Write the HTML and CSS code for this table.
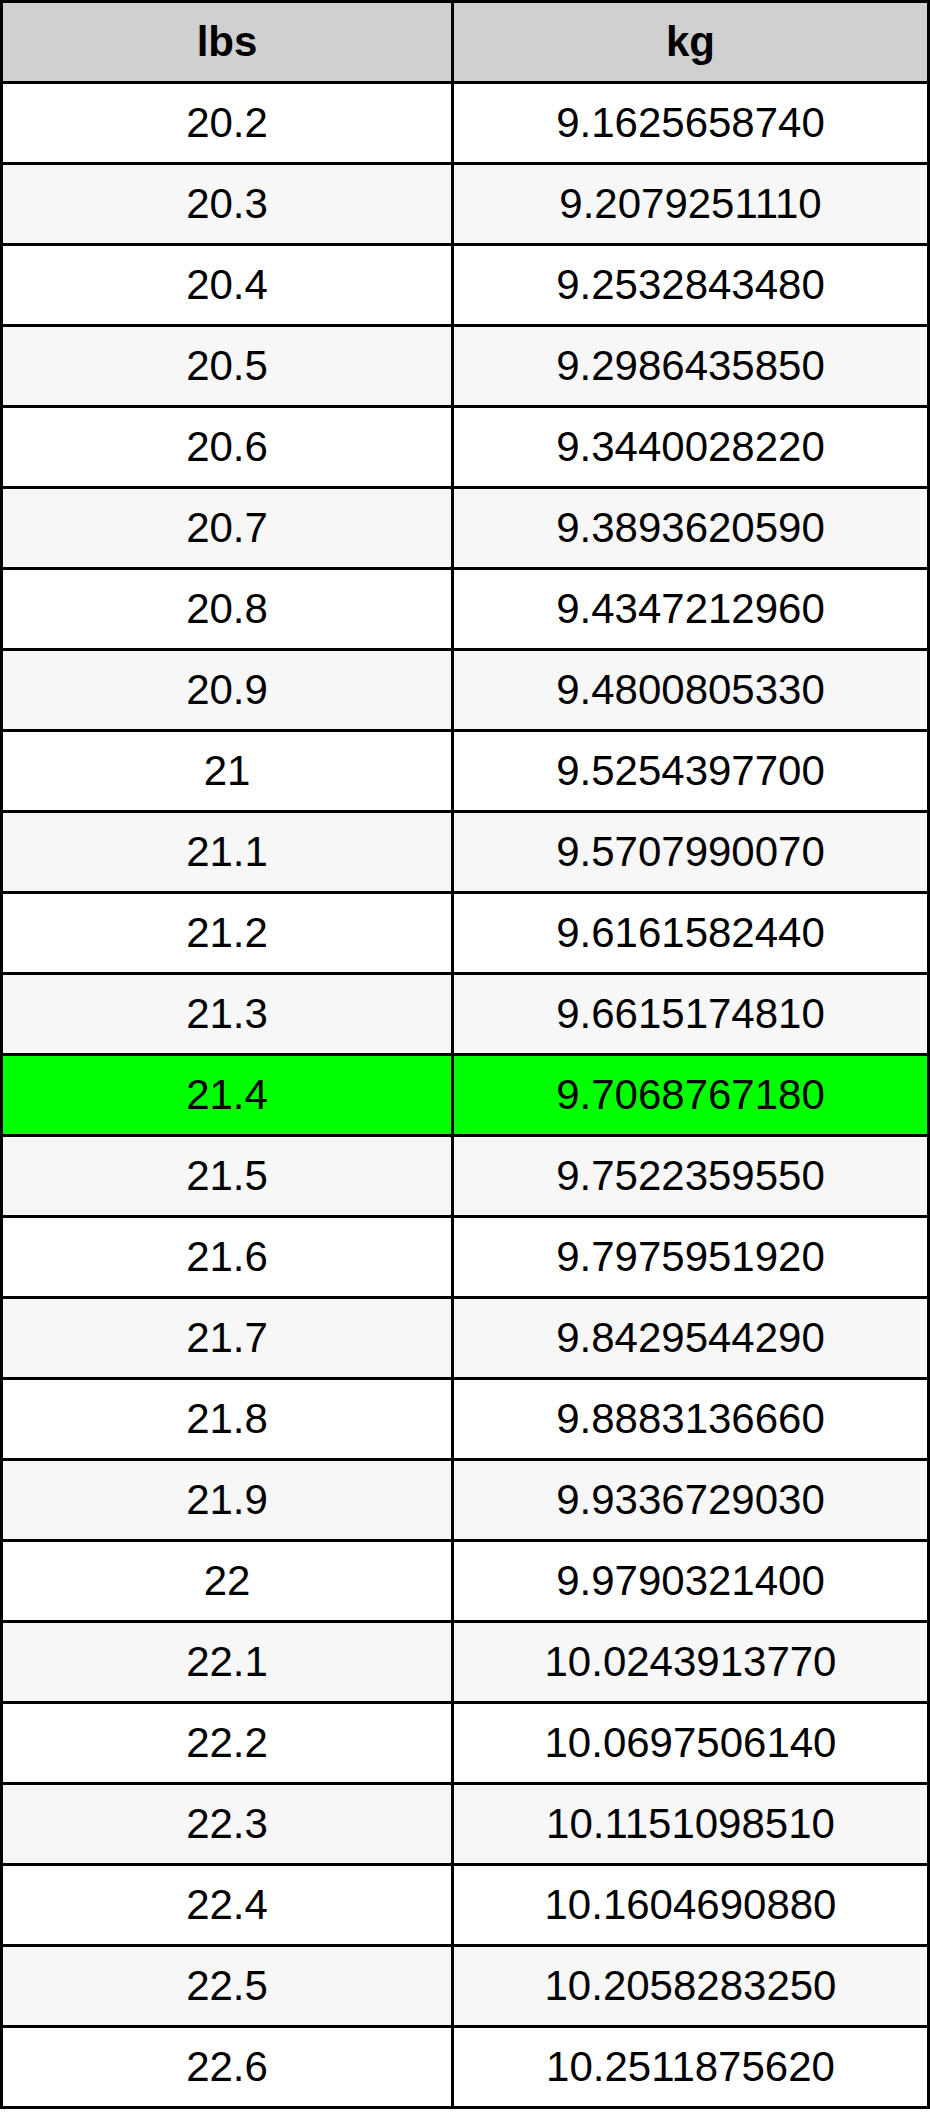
FILE: index.html
```html
<!DOCTYPE html>
<html>
<head>
<meta charset="utf-8">
<link rel="stylesheet" href="styles.css">
</head>
<body>
<table class="conv">
<colgroup><col class="c1"><col class="c2"></colgroup>
<thead>
<tr><th>lbs</th><th>kg</th></tr>
</thead>
<tbody>
<tr><td>20.2</td><td>9.1625658740</td></tr>
<tr><td>20.3</td><td>9.2079251110</td></tr>
<tr><td>20.4</td><td>9.2532843480</td></tr>
<tr><td>20.5</td><td>9.2986435850</td></tr>
<tr><td>20.6</td><td>9.3440028220</td></tr>
<tr><td>20.7</td><td>9.3893620590</td></tr>
<tr><td>20.8</td><td>9.4347212960</td></tr>
<tr><td>20.9</td><td>9.4800805330</td></tr>
<tr><td>21</td><td>9.5254397700</td></tr>
<tr><td>21.1</td><td>9.5707990070</td></tr>
<tr><td>21.2</td><td>9.6161582440</td></tr>
<tr><td>21.3</td><td>9.6615174810</td></tr>
<tr class="hl"><td>21.4</td><td>9.7068767180</td></tr>
<tr><td>21.5</td><td>9.7522359550</td></tr>
<tr><td>21.6</td><td>9.7975951920</td></tr>
<tr><td>21.7</td><td>9.8429544290</td></tr>
<tr><td>21.8</td><td>9.8883136660</td></tr>
<tr><td>21.9</td><td>9.9336729030</td></tr>
<tr><td>22</td><td>9.9790321400</td></tr>
<tr><td>22.1</td><td>10.0243913770</td></tr>
<tr><td>22.2</td><td>10.0697506140</td></tr>
<tr><td>22.3</td><td>10.1151098510</td></tr>
<tr><td>22.4</td><td>10.1604690880</td></tr>
<tr><td>22.5</td><td>10.2058283250</td></tr>
<tr><td>22.6</td><td>10.2511875620</td></tr>
</tbody>
</table>
</body>
</html>
```

FILE: styles.css
```css
html, body {
  margin: 0;
  padding: 0;
  background: #ffffff;
}

.conv {
  width: 930px;
  border-collapse: collapse;
  font-family: "Liberation Sans", Arial, sans-serif;
  font-size: 42px;
  color: #000000;
}

.conv .c1 { width: 451px; }

.conv th,
.conv td {
  border: 3px solid #000000;
  height: 78px;
  padding: 0;
  text-align: center;
  vertical-align: middle;
}

.conv th {
  background: #d0d0d0;
  font-weight: bold;
}

.conv tbody tr:nth-child(odd) td { background: #ffffff; }
.conv tbody tr:nth-child(even) td { background: #f7f7f7; }
.conv tbody tr.hl td { background: #00ff00; }
```
